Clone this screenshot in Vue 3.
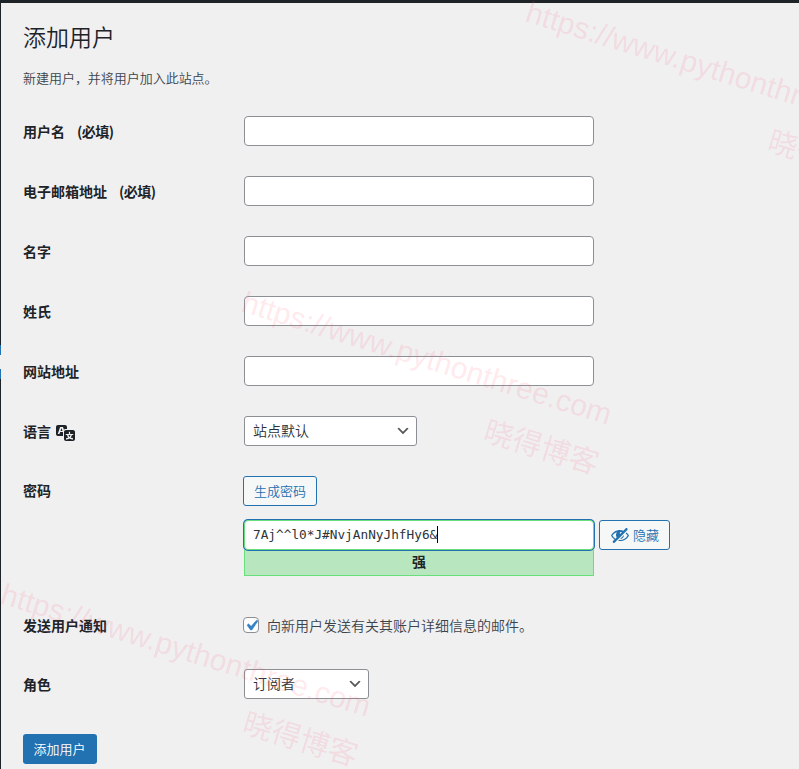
<script setup>
import { ref } from 'vue'

const fields = ref([
  { id: 'login', label: '用户名', required: true, value: '' },
  { id: 'email', label: '电子邮箱地址', required: true, value: '' },
  { id: 'first', label: '名字', value: '' },
  { id: 'last', label: '姓氏', value: '' },
  { id: 'url', label: '网站地址', value: '' },
])
const password = ref('7Aj^^l0*J#NvjAnNyJhfHy6&')
const notify = ref(true)
const marks = [
  { x: 524, y: 21 },
  { x: 240, y: 311 },
  { x: -1, y: 603 },
]
</script>

<template>
  <div class="page">
    <div class="topbar"></div>
    <div class="body">
      <div class="side"><i class="blue"></i><i class="notch"></i><i class="blue"></i></div>
      <main class="wrap">
        <h1>添加用户</h1>
        <p class="intro">新建用户，并将用户加入此站点。</p>

        <form @submit.prevent>
          <div v-for="f in fields" :key="f.id" class="row">
            <label class="name" :for="f.id">{{ f.label }}<span v-if="f.required" class="req">(必填)</span></label>
            <input :id="f.id" v-model="f.value" class="text" type="text" />
          </div>

          <div class="row">
            <span class="name lang">语言
              <svg class="translate" width="20" height="20" viewBox="0 0 20 20">
                <path fill="#1d2327" d="M11 7H9.49c-.63 0-1.25.3-1.59.7L7 5H4.13l-2.39 7h1.69l.74-2H7v4H2c-1.1 0-2-.9-2-2V5c0-1.1.9-2 2-2h7c1.1 0 2 .9 2 2v2zM6.51 9H4.49l1-2.93zM10 8h7c1.1 0 2 .9 2 2v7c0 1.1-.9 2-2 2h-7c-1.1 0-2-.9-2-2v-7c0-1.1.9-2 2-2zm7.25 5v-1.08h-3.17V9.75h-1.16v2.17H9.75V13h1.28c.11.85.56 1.85 1.28 2.62-.87.36-1.89.62-2.31.62-.01.02.22.97.2 1.46.84 0 2.21-.5 3.28-1.15 1.09.65 2.48 1.15 3.34 1.15-.02-.49.2-1.44.2-1.46-.43 0-1.49-.27-2.38-.63.7-.77 1.14-1.77 1.25-2.61h1.36zm-3.81 1.93c-.5-.46-.85-1.13-1.01-1.93h2.09c-.17.8-.51 1.47-1 1.93l-.04.03s-.03-.02-.04-.03z" />
              </svg>
            </span>
            <div class="select locale">
              <span>站点默认</span>
              <svg width="16" height="16" viewBox="0 0 20 20"><path d="M5 6l5 5 5-5 2 1-7 7-7-7 2-1z" fill="#555" /></svg>
            </div>
          </div>

          <div class="row pass-row">
            <span class="name">密码</span>
            <div class="pass">
              <button type="button" class="button">生成密码</button>
              <div class="pass-line">
                <div class="pass-col">
                  <div class="pass-field" tabindex="0"><span>{{ password }}</span><i class="caret"></i></div>
                  <div class="meter">强</div>
                </div>
                <button type="button" class="button hide">
                  <svg width="20" height="20" viewBox="0 0 20 20">
                    <path fill="#2271b1" d="M17.2 3.3l.16.17c.39.39.39 1.02 0 1.41L4.55 17.7c-.39.39-1.03.39-1.41 0l-.17-.17c-.39-.39-.39-1.02 0-1.41l1.59-1.6c-1.57-1-2.76-2.3-3.56-3.93.81-1.65 2.03-2.98 3.64-3.99S8.04 5.09 10 5.09c1.2 0 2.33.21 3.4.6l2.38-2.39c.39-.39 1.03-.39 1.42 0zm-7.09 4.01c-.23.25-.34.54-.34.88 0 .31.12.58.31.81l1.8-1.79c-.13-.12-.28-.21-.45-.26-.11-.01-.28-.03-.49-.04-.33.03-.6.16-.83.4zM2.4 10.59c.69 1.23 1.71 2.25 3.05 3.05l1.28-1.28c-.51-.69-.77-1.47-.77-2.36 0-1.06.36-1.98 1.09-2.76-1.04.27-1.96.7-2.76 1.26-.8.58-1.43 1.27-1.89 2.09zm13.22-2.13l.96-.96c1.02.86 1.83 1.89 2.42 3.09-.81 1.65-2.03 2.98-3.64 3.99s-3.4 1.51-5.36 1.51c-.63 0-1.24-.07-1.83-.18l1.07-1.07c.25.02.5.05.76.05 1.63 0 3.13-.4 4.5-1.21s2.4-1.84 3.1-3.09c-.46-.82-1.09-1.51-1.89-2.09-.03-.01-.06-.03-.09-.04zm-5.58 5.58l4-4c-.01 1.1-.41 2.04-1.18 2.81-.78.78-1.72 1.18-2.82 1.19z" />
                  </svg>
                  <span>隐藏</span>
                </button>
              </div>
            </div>
          </div>

          <div class="row notify-row">
            <span class="name">发送用户通知</span>
            <label class="check">
              <input v-model="notify" type="checkbox" class="native" />
              <span class="box">
                <svg v-if="notify" width="21" height="21" viewBox="0 0 20 20"><path d="M14.83 4.89l1.34.94-5.81 8.38H9.02L5.78 9.67l1.34-1.25 2.57 2.4z" fill="#3582c4" stroke="#3582c4" stroke-width=".5" /></svg>
              </span>
              <span class="check-text">向新用户发送有关其账户详细信息的邮件。</span>
            </label>
          </div>

          <div class="row role-row">
            <span class="name">角色</span>
            <div class="select role">
              <span>订阅者</span>
              <svg width="16" height="16" viewBox="0 0 20 20"><path d="M5 6l5 5 5-5 2 1-7 7-7-7 2-1z" fill="#555" /></svg>
            </div>
          </div>

          <button class="primary" type="submit">添加用户</button>
        </form>
      </main>
    </div>

    <svg class="watermark" width="799" height="769" viewBox="0 0 799 769">
      <g v-for="(m, i) in marks" :key="i">
        <text :transform="`translate(${m.x} ${m.y}) rotate(17.2)`">https://www.pythonthree.com</text>
        <text class="cjk" :transform="`translate(${m.x + 242} ${m.y + 129}) rotate(17)`">晓得博客</text>
      </g>
    </svg>
  </div>
</template>

<style>
body {
  margin: 0;
  overflow: hidden;
}
</style>

<style scoped>
* {
  box-sizing: border-box;
}
.page {
  position: relative;
  display: flex;
  flex-direction: column;
  height: 769px;
  overflow: hidden;
  background: #f0f0f1;
  color: #3c434a;
  font-family: "Noto Sans CJK SC", sans-serif;
  font-size: 14px;
}
.topbar {
  flex: none;
  height: 3px;
  background: #1d2327;
}
.body {
  display: flex;
  flex: 1;
}
.side {
  display: flex;
  flex-direction: column;
  width: 1px;
  padding-top: 342px;
  background: #1d2327;
}
.blue {
  height: 10px;
  background: #2271b1;
}
.notch {
  height: 14px;
  background: #f0f0f1;
}
.wrap {
  flex: 1;
  padding: 15px 0 0 22px;
}
h1 {
  margin: 0;
  color: #1d2327;
  font-size: 23px;
  font-weight: 350;
  line-height: 36px;
}
.intro {
  margin: 14px 0 0;
  font-size: 13px;
  font-weight: 350;
  line-height: 20px;
  letter-spacing: -0.03px;
}
form {
  padding-top: 13px;
}
.row {
  display: flex;
  align-items: center;
  height: 60px;
}
.name {
  flex: none;
  width: 221px;
  padding-bottom: 1px;
  color: #1d2327;
  font-weight: 600;
  line-height: 20px;
}
.req {
  margin-left: 12px;
  letter-spacing: -0.5px;
}
.lang {
  display: flex;
  align-items: center;
  gap: 5px;
  padding-bottom: 0;
}
.translate {
  position: relative;
  top: 1px;
}
.text {
  width: 350px;
  height: 30px;
  margin: 0;
  padding: 0 8px;
  border: 1px solid #8c8f94;
  border-radius: 4px;
  outline: 0;
  background: #fff;
}
.select {
  display: flex;
  align-items: center;
  justify-content: space-between;
  height: 30px;
  padding: 0 5px 0 8px;
  border: 1px solid #8c8f94;
  border-radius: 3px;
  background: #fff;
  color: #2c3338;
  font-weight: 350;
  line-height: 26px;
}
.select span {
  padding-bottom: 2px;
}
.locale {
  width: 173px;
}
.role {
  width: 125px;
}
.pass-row {
  align-items: flex-start;
  height: 130px;
  padding-top: 15px;
}
.pass-row .name {
  padding-top: 4px;
}
.button {
  height: 30px;
  margin: 0 0 0 -1px;
  padding: 0 10px;
  border: 1px solid #2271b1;
  border-radius: 3px;
  background: #f6f7f7;
  color: #2271b1;
  font-family: inherit;
  font-size: 13px;
  font-weight: 350;
  line-height: 28px;
}
.pass {
  display: flex;
  flex-direction: column;
  align-items: flex-start;
  gap: 14px;
}
.pass-line {
  display: flex;
  align-items: flex-start;
  gap: 6px;
}
.pass-col {
  width: 350px;
}
.pass-field {
  position: relative;
  z-index: 1;
  display: flex;
  align-items: center;
  height: 30px;
  padding: 0 0 2px 8px;
  border: 1px solid #68de7c;
  border-radius: 4px;
  outline: 0;
  background: #fff;
  box-shadow: 0 0 0 1px #2271b1;
  color: #2c3338;
  font-family: "DejaVu Sans Mono", monospace;
  font-size: 12.75px;
}
.caret {
  width: 1px;
  height: 17px;
  background: #000;
}
.meter {
  height: 26px;
  border: 1px solid #68de7c;
  border-top: 0;
  background: #b8e6bf;
  color: #1d2327;
  font-weight: 600;
  line-height: 22px;
  text-align: center;
}
.hide {
  display: flex;
  align-items: center;
  gap: 3px;
  width: 71px;
}
.notify-row {
  height: 68px;
}
.check {
  display: flex;
  align-items: center;
  margin-left: -1px;
  font-weight: 350;
}
.check-text {
  padding-bottom: 1px;
}
.native {
  display: none;
}
.box {
  display: flex;
  align-items: center;
  justify-content: center;
  width: 16px;
  height: 16px;
  margin-right: 8px;
  border: 1px solid #8c8f94;
  border-radius: 4px;
  background: #fff;
}
.box svg {
  flex: none;
}
.role-row {
  height: 50px;
}
.primary {
  display: block;
  width: 74px;
  height: 30px;
  margin: 25px 0 0;
  padding: 0 1px 0 0;
  border: 0;
  border-radius: 3px;
  background: #2271b1;
  color: #fff;
  font-family: inherit;
  font-size: 13px;
  font-weight: 350;
  line-height: 28px;
}
.watermark {
  position: absolute;
  top: 0;
  left: 0;
  z-index: 2;
  pointer-events: none;
  fill: #ff5a78;
  fill-opacity: 0.14;
  font-family: "Liberation Sans", "Noto Sans CJK SC", sans-serif;
  font-size: 30px;
}
.cjk {
  font-size: 29.5px;
}
</style>
